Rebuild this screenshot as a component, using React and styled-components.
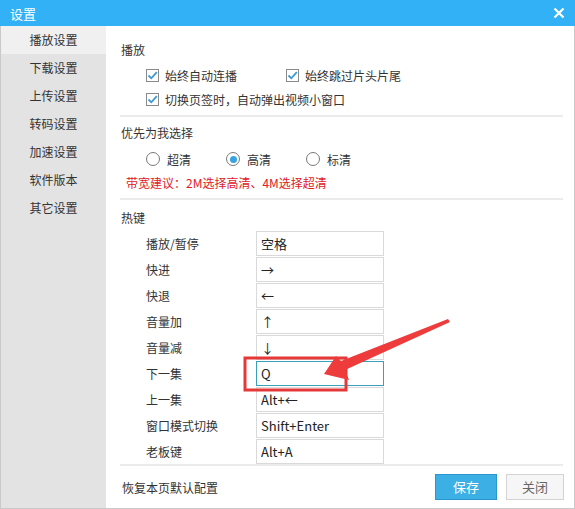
import React from 'react';
import styled, { createGlobalStyle } from 'styled-components';

const GlobalStyle = createGlobalStyle`
  html, body {
    margin: 0;
    padding: 0;
    background: #ffffff;
  }
  body {
    font-family: "Noto Sans CJK SC", "Noto Sans", "Liberation Sans", sans-serif;
    font-size: 12px;
    color: #333333;
  }
`

const Window = styled.div`
  position: relative;
  width: 575px;
  height: 509px;
  display: flex;
  flex-direction: column;
  overflow: hidden;
`

const TitleBar = styled.div`
  height: 26px;
  flex: none;
  background: #33b1f6;
  color: #ffffff;
  display: flex;
  align-items: center;
  justify-content: space-between;
  padding: 0 10px 0 10px;
  font-size: 13px;
`

const CloseX = styled.svg`
  width: 12px;
  height: 12px;
`

const Body = styled.div`
  flex: 1;
  display: flex;
  border: 1px solid #c9c9c9;
  border-top: none;
  min-height: 0;
`

const Sidebar = styled.div`
  width: 105px;
  flex: none;
  background: #e3e3e3;
  display: flex;
  flex-direction: column;
`

const NavItem = styled.div`
  height: 28px;
  padding-bottom: 2px;
  box-sizing: border-box;
  display: flex;
  align-items: center;
  justify-content: center;
  background: ${props => props.$active ? '#f0f0f0' : 'transparent'};
  color: #333333;
`

const Main = styled.div`
  flex: 1;
  display: flex;
  flex-direction: column;
  background: #ffffff;
`

const Content = styled.div`
  flex: 1;
  padding: 0 11px 0 14px;
`

const Section = styled.div`
  border-bottom: 2px solid #ebebeb;
  padding: ${props => props.$pad || '0'};
`

const Heading = styled.div`
  height: 20px;
  line-height: 20px;
  padding-left: 1px;
  margin-bottom: ${props => props.$gap || '0'};
`

const OptionRow = styled.div`
  height: 24px;
  display: flex;
  align-items: center;
  padding-left: 26px;
`

const Option = styled.label`
  display: flex;
  align-items: center;
  gap: ${props => props.$gap || '6px'};
  width: ${props => props.$width || 'auto'};
`

const Box = styled.span`
  width: 11px;
  height: 11px;
  border: 1px solid #8a8a8a;
  background: #ffffff;
  display: flex;
  align-items: center;
  justify-content: center;
`

const Radio = styled.span`
  width: 12px;
  height: 12px;
  border: 1px solid #7a7a7a;
  border-radius: 50%;
  background: #ffffff;
  display: flex;
  align-items: center;
  justify-content: center;

  &::after {
    content: '';
    width: 7px;
    height: 7px;
    border-radius: 50%;
    background: ${props => props.$on ? '#36a3e2' : 'transparent'};
  }
`

const Hint = styled.div`
  height: 24px;
  line-height: 24px;
  padding-left: 6px;
  color: #e0201f;
`

const KeyRow = styled.div`
  height: 26px;
  display: flex;
  align-items: center;
  padding-left: 26px;
`

const KeyLabel = styled.div`
  width: 110px;
`

const KeyBox = styled.div`
  width: 120px;
  height: 23px;
  line-height: 23px;
  padding-left: 4px;
  padding-right: 2px;
  border: 1px solid ${props => props.$focus ? '#3a9fb8' : '#d9d9d9'};
  font-size: 13px;
  color: #222222;
`

const Footer = styled.div`
  height: 42px;
  flex: none;
  display: flex;
  align-items: center;
  padding: 0 10px 0 16px;
`

const ResetLink = styled.div`
  flex: 1;
  font-size: 12px;
  color: #333333;
`

const Button = styled.div`
  width: ${props => props.$primary ? '60px' : '56px'};
  height: 24px;
  line-height: 24px;
  text-align: center;
  margin-left: ${props => props.$primary ? '0' : '9px'};
  font-size: 13px;
  background: ${props => props.$primary ? '#3cafe4' : '#f6f6f6'};
  border: 1px solid ${props => props.$primary ? '#2a97cc' : '#d4d4d4'};
  color: ${props => props.$primary ? '#ffffff' : '#666666'};
`

const Annotation = styled.svg`
  position: absolute;
  left: 0;
  top: 0;
  width: 575px;
  height: 509px;
  pointer-events: none;
`

const Check = () => (
  <svg width="11" height="11" viewBox="0 0 11 11">
    <path d="M1.5 5.5 L4.3 8.3 L9.8 2.2" fill="none" stroke="#3a98d4" strokeWidth="1.8" />
  </svg>
)

const navItems = ['播放设置', '下载设置', '上传设置', '转码设置', '加速设置', '软件版本', '其它设置'];

const hotkeys = [
  ['播放/暂停', '空格'],
  ['快进', '→'],
  ['快退', '←'],
  ['音量加', '↑'],
  ['音量减', '↓'],
  ['下一集', 'Q', true],
  ['上一集', 'Alt+←'],
  ['窗口模式切换', 'Shift+Enter'],
  ['老板键', 'Alt+A'],
];

function App() {
  return (
    <Window>
      <GlobalStyle />
      <TitleBar>
        <span>设置</span>
        <CloseX viewBox="0 0 12 12">
          <path d="M1.5 1.5 L10.5 10.5 M10.5 1.5 L1.5 10.5" stroke="#ffffff" strokeWidth="2.2" />
        </CloseX>
      </TitleBar>

      <Body>
        <Sidebar>
          {navItems.map((item, idx) => (
            <NavItem key={idx} $active={idx === 0}>{item}</NavItem>
          ))}
        </Sidebar>

        <Main>
          <Content>
            {/* 播放 */}
            <Section $pad='14px 0 4px 0'>
              <Heading $gap='3px'>播放</Heading>
              <OptionRow>
                <Option $width='140px'><Box><Check /></Box>始终自动连播</Option>
                <Option><Box><Check /></Box>始终跳过片头片尾</Option>
              </OptionRow>
              <OptionRow>
                <Option><Box><Check /></Box>切换页签时，自动弹出视频小窗口</Option>
              </OptionRow>
            </Section>

            {/* 清晰度 */}
            <Section $pad='6px 0 3px 0'>
              <Heading $gap='4px'>优先为我选择</Heading>
              <OptionRow>
                <Option $width='80px' $gap='7px'><Radio />超清</Option>
                <Option $width='80px' $gap='7px'><Radio $on />高清</Option>
                <Option $gap='7px'><Radio />标清</Option>
              </OptionRow>
              <Hint>带宽建议：2M选择高清、4M选择超清</Hint>
            </Section>

            {/* 热键 */}
            <Section $pad='8px 0 0 0'>
              <Heading $gap='2px'>热键</Heading>
              {hotkeys.map(([label, key, focus], idx) => (
                <KeyRow key={idx}>
                  <KeyLabel>{label}</KeyLabel>
                  <KeyBox $focus={focus}>{key}</KeyBox>
                </KeyRow>
              ))}
            </Section>
          </Content>

          <Footer>
            <ResetLink>恢复本页默认配置</ResetLink>
            <Button $primary>保存</Button>
            <Button>关闭</Button>
          </Footer>
        </Main>
      </Body>

      <Annotation viewBox="0 0 575 509">
        <rect x="245" y="358" width="101" height="32" fill="none" stroke="#e63838" strokeWidth="3" />
        <polygon
          points="324,374 336,356 341,361 448,319 450,322 345,370 349,380"
          fill="#ee3b3b"
        />
      </Annotation>
    </Window>
  );
}

export default App;
